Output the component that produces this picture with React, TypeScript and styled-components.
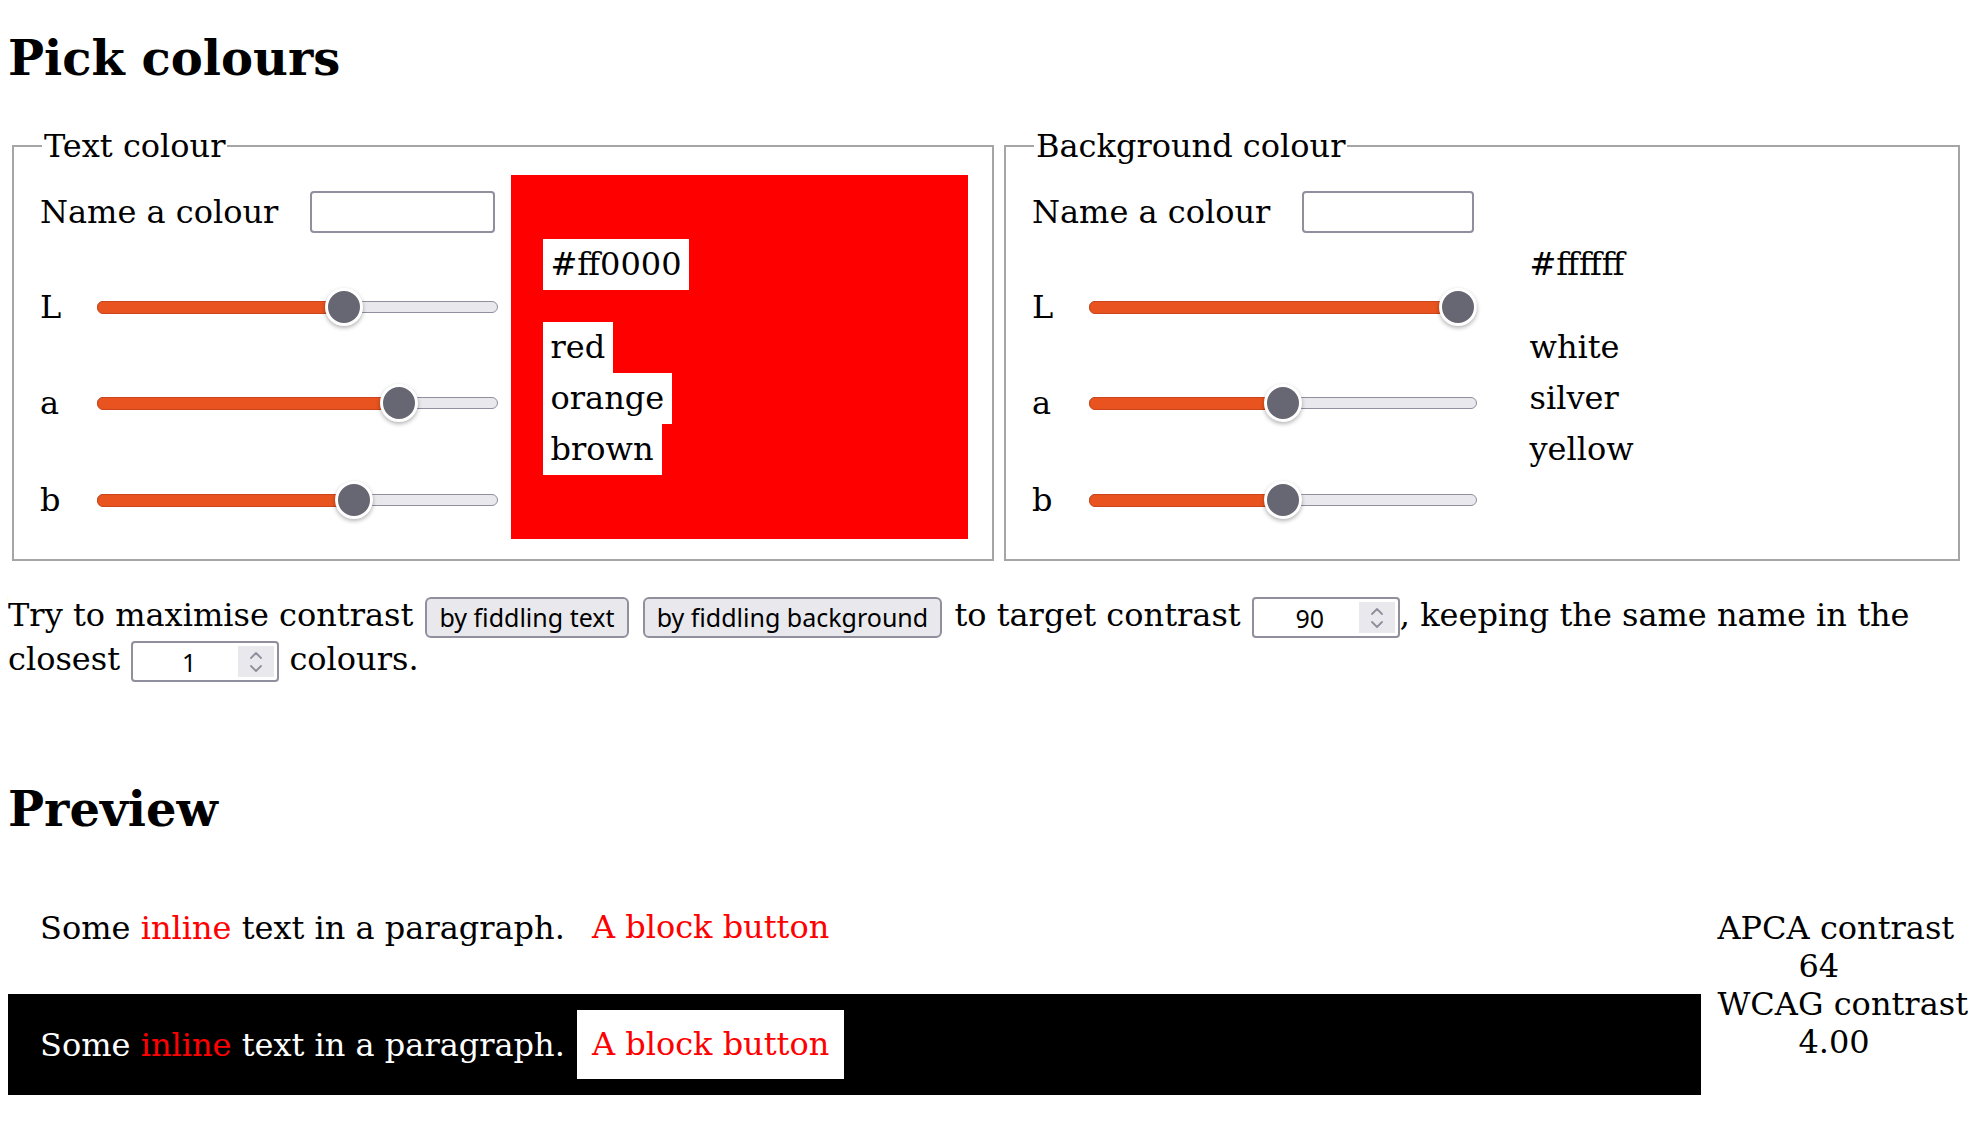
import React from "react";
import styled, { createGlobalStyle, css } from "styled-components";

const GlobalStyle = createGlobalStyle`
  html, body {
    background: #ffffff;
  }
  body {
    margin: 8px;
    font-family: "DejaVu Serif", serif;
    font-size: 32px;
    color: #000000;
  }
`;

const headingStyle = css`
  font-size: 48px;
  font-weight: bold;
  line-height: normal;
`;

const PageTitle = styled.h1`
  ${headingStyle};
  margin: 22px 0 41px;
`;

const SectionTitle = styled.h2`
  ${headingStyle};
  margin: 99px 0 40px;
`;

/* ---------- colour pickers ---------- */

const PickerRow = styled.div`
  display: flex;
  gap: 10px;
  padding-left: 4px;
`;

const Fieldset = styled.fieldset<{ $width: number }>`
  box-sizing: border-box;
  width: ${(p) => p.$width}px;
  min-width: 0;
  margin: 0;
  padding: 0 24px 10px 26px;
  border: 2px solid #a5a5a5;
`;

const Legend = styled.legend`
  margin-left: 2px;
  padding: 0 2px;
  line-height: normal;
`;

const PickerBody = styled.div`
  display: grid;
  grid-template-columns: 1fr 1fr;
  column-gap: 13px;
  align-items: center;
`;

const Controls = styled.div`
  display: grid;
  grid-template-columns: 57px 1fr;
  grid-template-rows: 94px 96px 96px 98px;
  align-items: center;
`;

const NameRow = styled.label`
  grid-column: 1 / -1;
  display: flex;
  align-items: center;
`;

const TextField = styled.input`
  box-sizing: border-box;
  flex: 1;
  min-width: 0;
  height: 42px;
  margin: 0 3px 0 32px;
  border: 2px solid #8f8f9d;
  border-radius: 4px;
  background: #ffffff;
`;

const ChannelLabel = styled.span`
  line-height: normal;
`;

const SliderBox = styled.div`
  position: relative;
  display: flex;
  align-items: center;
  height: 38px;
`;

const Rail = styled.div`
  position: relative;
  box-sizing: border-box;
  width: 100%;
  height: 12px;
  border: 1.5px solid #8f8f9d;
  border-radius: 6px;
  background: #e9e9ed;
`;

const Fill = styled.div`
  position: absolute;
  top: -1.5px;
  bottom: -1.5px;
  left: -1.5px;
  box-sizing: border-box;
  border: 1.5px solid #c9441a;
  border-radius: 6px;
  background: #e8531f;
`;

const Thumb = styled.div`
  position: absolute;
  top: 0;
  box-sizing: border-box;
  width: 38px;
  height: 38px;
  border: 3px solid #ffffff;
  border-radius: 50%;
  background: #676774;
  box-shadow: 0 2px 4px rgba(0, 0, 0, 0.3);
`;

const Swatch = styled.div<{ $bg: string }>`
  padding: 32px;
  background: ${(p) => p.$bg};
`;

const Chip = styled.div`
  width: fit-content;
  padding: 7px 8px;
  line-height: 37px;
  background: #ffffff;
  color: #000000;
`;

const HexChip = styled(Chip)`
  margin: 32px 0;
`;

const NameList = styled.ul`
  list-style: none;
  margin: 0 0 32px;
  padding: 0;
`;

/* ---------- contrast controls ---------- */

const Instructions = styled.p`
  margin: 33px 0 0;
  line-height: 43px;
`;

const ActionButton = styled.button`
  box-sizing: border-box;
  height: 41px;
  margin: 0 2px;
  padding: 0 12px;
  border: 2px solid #8f8f9d;
  border-radius: 6px;
  background: #e9e9ed;
  color: #000000;
  font-family: "Noto Sans", sans-serif;
  font-size: 25px;
  line-height: 35px;
  vertical-align: middle;
`;

const NumberField = styled.span`
  display: inline-flex;
  box-sizing: border-box;
  width: 148px;
  height: 41px;
  margin-left: 1px;
  padding: 3px;
  border: 2px solid #8f8f9d;
  border-radius: 4px;
  background: #ffffff;
  vertical-align: middle;
`;

const NumberText = styled.input`
  flex: 1;
  min-width: 0;
  padding: 0 0 0 4px;
  border: 0;
  outline: none;
  background: transparent;
  color: #000000;
  font-family: "Noto Sans", sans-serif;
  font-size: 25px;
  text-align: center;
`;

const Spinner = styled.span`
  display: flex;
  flex-direction: column;
  align-items: center;
  justify-content: center;
  gap: 6px;
  width: 36px;
  background: #e9e9ed;
`;

/* ---------- preview ---------- */

const PreviewRow = styled.div`
  display: flex;
  align-items: flex-start;
  gap: 16px;
`;

const Samples = styled.div`
  flex: 1;
  display: flex;
  flex-direction: column;
  gap: 16px;
`;

const Sample = styled.div<{ $bg: string; $fg: string }>`
  display: flex;
  align-items: center;
  padding: 16px 32px;
  background: ${(p) => p.$bg};
  color: ${(p) => p.$fg};
`;

const SampleText = styled.p`
  margin: 0;
  line-height: normal;
`;

const Accent = styled.span`
  color: #ff0000;
`;

const BlockButton = styled.button`
  margin-left: 12px;
  padding: 16px 15px;
  border: 0;
  background: #ffffff;
  color: #ff0000;
  font: inherit;
  line-height: 37px;
`;

const Metrics = styled.dl`
  margin: 32px 0 0;
  line-height: normal;
`;

const MetricName = styled.dt`
  margin: 0;
`;

const MetricValue = styled.dd`
  margin: 0 0 0 81px;
`;

/* ---------- data ---------- */

type Picker = {
  legend: string;
  width: number;
  hex: string;
  names: string[];
  channels: [string, number][];
};

const pickers: Picker[] = [
  {
    legend: "Text colour",
    width: 982,
    hex: "#ff0000",
    names: ["red", "orange", "brown"],
    channels: [
      ["L", 0.629],
      ["a", 0.78],
      ["b", 0.657],
    ],
  },
  {
    legend: "Background colour",
    width: 956,
    hex: "#ffffff",
    names: ["white", "silver", "yellow"],
    channels: [
      ["L", 1],
      ["a", 0.5],
      ["b", 0.5],
    ],
  },
];

function Chevrons() {
  return (
    <>
      <svg width="12" height="7" viewBox="0 0 12 7" fill="none">
        <path d="M1 6 L6 1 L11 6" stroke="#8f8f9d" strokeWidth="1.8" strokeLinecap="round" strokeLinejoin="round" />
      </svg>
      <svg width="12" height="7" viewBox="0 0 12 7" fill="none">
        <path d="M1 1 L6 6 L11 1" stroke="#8f8f9d" strokeWidth="1.8" strokeLinecap="round" strokeLinejoin="round" />
      </svg>
    </>
  );
}

function NumberInput({ value }: { value: number }) {
  return (
    <NumberField>
      <NumberText defaultValue={value} />
      <Spinner>
        <Chevrons />
      </Spinner>
    </NumberField>
  );
}

function Slider({ frac }: { frac: number }) {
  return (
    <SliderBox>
      <Rail>
        <Fill style={{ width: `calc((100% - 35px) * ${frac} + 19px)` }} />
      </Rail>
      <Thumb style={{ left: `calc((100% - 38px) * ${frac})` }} />
    </SliderBox>
  );
}

function ColourPicker({ picker }: { picker: Picker }) {
  return (
    <Fieldset $width={picker.width}>
      <Legend>{picker.legend}</Legend>
      <PickerBody>
        <Controls>
          <NameRow>
            Name a colour
            <TextField type="text" />
          </NameRow>
          {picker.channels.map(([name, frac]) => (
            <React.Fragment key={name}>
              <ChannelLabel>{name}</ChannelLabel>
              <Slider frac={frac} />
            </React.Fragment>
          ))}
        </Controls>
        <Swatch $bg={picker.hex}>
          <HexChip>{picker.hex}</HexChip>
          <NameList>
            {picker.names.map((n) => (
              <Chip as="li" key={n}>
                {n}
              </Chip>
            ))}
          </NameList>
        </Swatch>
      </PickerBody>
    </Fieldset>
  );
}

function PreviewSample({ bg, fg }: { bg: string; fg: string }) {
  return (
    <Sample $bg={bg} $fg={fg}>
      <SampleText>
        Some <Accent>inline</Accent> text in a paragraph.
      </SampleText>
      <BlockButton>A block button</BlockButton>
    </Sample>
  );
}

export default function App() {
  return (
    <>
      <GlobalStyle />
      <PageTitle>Pick colours</PageTitle>
      <PickerRow>
        {pickers.map((p) => (
          <ColourPicker key={p.legend} picker={p} />
        ))}
      </PickerRow>
      <Instructions>
        Try to maximise contrast <ActionButton>by fiddling text</ActionButton>{" "}
        <ActionButton>by fiddling background</ActionButton> to target contrast{" "}
        <NumberInput value={90} />, keeping the same name in the closest{" "}
        <NumberInput value={1} /> colours.
      </Instructions>
      <SectionTitle>Preview</SectionTitle>
      <PreviewRow>
        <Samples>
          <PreviewSample bg="#ffffff" fg="#000000" />
          <PreviewSample bg="#000000" fg="#ffffff" />
        </Samples>
        <Metrics>
          <MetricName>APCA contrast</MetricName>
          <MetricValue>64</MetricValue>
          <MetricName>WCAG contrast</MetricName>
          <MetricValue>4.00</MetricValue>
        </Metrics>
      </PreviewRow>
    </>
  );
}
